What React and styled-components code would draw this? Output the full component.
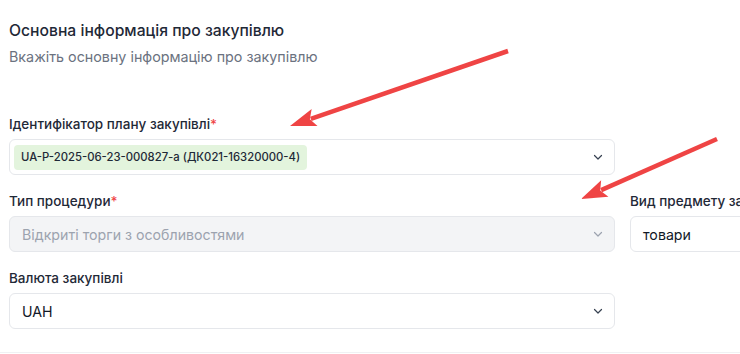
import React from 'react';
import styled, { createGlobalStyle } from 'styled-components';

const GlobalStyle = createGlobalStyle`
  html, body {
    margin: 0;
    padding: 0;
    background: #fff;
    overflow: hidden;
  }
  body {
    font-family: Inter, "Noto Sans", Arial, sans-serif;
    color: #111827;
  }
`;

const Page = styled.div`
  position: relative;
  width: 740px;
  height: 354px;
  overflow: hidden;
  box-sizing: border-box;
  padding: 21px 0 0 9px;
`;

const Header = styled.div`
  display: flex;
  flex-direction: column;
  gap: 6px;
  margin-bottom: 48px;
`;

const Title = styled.h2`
  margin: 0;
  font-size: 15.7px;
  line-height: 20px;
  font-weight: 500;
  color: #1f2937;
`;

const Subtitle = styled.p`
  margin: 0;
  font-size: 14.3px;
  line-height: 20px;
  color: #6b7280;
`;

const Grid = styled.div`
  display: grid;
  grid-template-columns: 606px 300px;
  column-gap: 15px;
  row-gap: 17px;
  width: 921px;
`;

const Field = styled.div`
  display: flex;
  flex-direction: column;
  gap: 6px;
  grid-column: ${(p) => p.$col || 'auto'};
`;

const Label = styled.label`
  font-size: 13.5px;
  line-height: 18px;
  font-weight: 500;
  color: #1f2937;
  white-space: nowrap;
`;

const Star = styled.span`
  color: #ef4444;
`;

const Select = styled.div`
  display: flex;
  align-items: center;
  justify-content: space-between;
  box-sizing: border-box;
  height: 36px;
  padding: 0 10px 0 ${(p) => (p.$chip ? '4px' : '12px')};
  border: 1px solid #e5e7eb;
  border-radius: 6px;
  background: ${(p) => (p.$disabled ? '#f3f4f6' : '#fff')};
  color: ${(p) => (p.$disabled ? '#9ca3af' : '#111827')};
  font-size: 14.2px;
`;

const Chip = styled.span`
  display: inline-flex;
  align-items: center;
  height: 25px;
  padding: 0 7px;
  border-radius: 4px;
  background: #e3f4dd;
  color: #1f2937;
  font-size: 11.3px;
  font-weight: 500;
`;

const Chevron = styled.svg`
  flex: none;
  width: 12px;
  height: 12px;
  color: ${(p) => (p.$muted ? '#9ca3af' : '#374151')};
`;

const Divider = styled.div`
  position: absolute;
  left: 0;
  right: 0;
  bottom: 1px;
  height: 1px;
  background: #f0f1f3;
`;

const Arrows = styled.svg`
  position: absolute;
  inset: 0;
  pointer-events: none;
`;

const ChevronDown = ({ muted }) => (
  <Chevron $muted={muted} viewBox="0 0 12 12" fill="none">
    <path d="M2.5 4.5 6 8l3.5-3.5" stroke="currentColor" strokeWidth="1.2" strokeLinecap="round" strokeLinejoin="round" />
  </Chevron>
);

const Arrow = ({ x1, y1, x2, y2 }) => {
  const dx = x2 - x1;
  const dy = y2 - y1;
  const len = Math.hypot(dx, dy);
  const ux = dx / len;
  const uy = dy / len;
  const head = 26;
  const half = 9;
  const bx = x2 - ux * head;
  const by = y2 - uy * head;
  const px = -uy;
  const py = ux;
  return (
    <g>
      <line x1={x1} y1={y1} x2={bx + ux * 4} y2={by + uy * 4} stroke="#ef4444" strokeWidth="4.5" strokeLinecap="butt" />
      <polygon
        points={`${x2},${y2} ${bx + px * half},${by + py * half} ${bx + ux * 5},${by + uy * 5} ${bx - px * half},${by - py * half}`}
        fill="#ef4444"
      />
    </g>
  );
};

const App = () => {
  return (
    <>
      <GlobalStyle />
      <Page>
        <Header>
          <Title>Основна інформація про закупівлю</Title>
          <Subtitle>Вкажіть основну інформацію про закупівлю</Subtitle>
        </Header>
        <Grid>
          <Field $col="1">
            <Label>
              Ідентифікатор плану закупівлі<Star>*</Star>
            </Label>
            <Select $chip>
              <Chip>UA-P-2025-06-23-000827-a (ДК021-16320000-4)</Chip>
              <ChevronDown />
            </Select>
          </Field>
          <Field $col="1">
            <Label>
              Тип процедури<Star>*</Star>
            </Label>
            <Select $disabled>
              <span>Відкриті торги з особливостями</span>
              <ChevronDown muted />
            </Select>
          </Field>
          <Field $col="2">
            <Label>Вид предмету закупівлі</Label>
            <Select>
              <span>товари</span>
            </Select>
          </Field>
          <Field $col="1">
            <Label>Валюта закупівлі</Label>
            <Select>
              <span>UAH</span>
              <ChevronDown />
            </Select>
          </Field>
        </Grid>
        <Divider />
        <Arrows width="740" height="354">
          <Arrow x1={508} y1={51} x2={290} y2={126} />
          <Arrow x1={717} y1={139} x2={581} y2={199} />
        </Arrows>
      </Page>
    </>
  );
};

export default App;
